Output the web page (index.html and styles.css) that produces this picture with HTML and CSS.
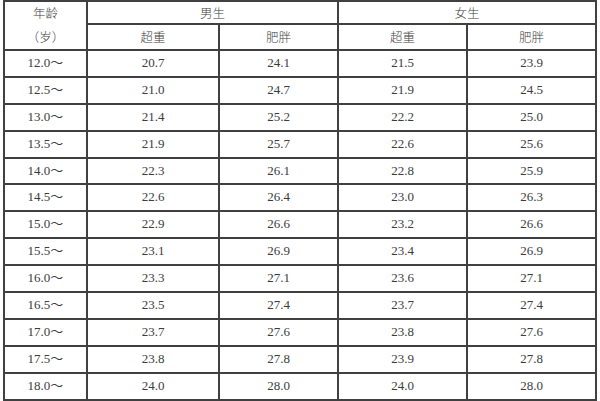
FILE: index.html
```html
<!DOCTYPE html>
<html lang="zh-CN">
<head>
<meta charset="utf-8">
<link rel="stylesheet" href="styles.css">
</head>
<body>
<div class="wrap">
<table class="bmi">
  <colgroup>
    <col class="c-age">
    <col class="c-b1">
    <col class="c-b2">
    <col class="c-g1">
    <col class="c-g2">
  </colgroup>
  <thead>
    <tr class="h1">
      <th rowspan="2" class="age-head"><div class="l1">年龄</div><div class="l2">（岁）</div></th>
      <th colspan="2"><div class="in">男生</div></th>
      <th colspan="2"><div class="in">女生</div></th>
    </tr>
    <tr class="h2">
      <th><div class="in">超重</div></th><th><div class="in">肥胖</div></th><th><div class="in">超重</div></th><th><div class="in">肥胖</div></th>
    </tr>
  </thead>
  <tbody>
    <tr><td><div class="in">12.0～</div></td><td><div class="in">20.7</div></td><td><div class="in">24.1</div></td><td><div class="in">21.5</div></td><td><div class="in">23.9</div></td></tr>
    <tr><td><div class="in">12.5～</div></td><td><div class="in">21.0</div></td><td><div class="in">24.7</div></td><td><div class="in">21.9</div></td><td><div class="in">24.5</div></td></tr>
    <tr><td><div class="in">13.0～</div></td><td><div class="in">21.4</div></td><td><div class="in">25.2</div></td><td><div class="in">22.2</div></td><td><div class="in">25.0</div></td></tr>
    <tr><td><div class="in">13.5～</div></td><td><div class="in">21.9</div></td><td><div class="in">25.7</div></td><td><div class="in">22.6</div></td><td><div class="in">25.6</div></td></tr>
    <tr><td><div class="in">14.0～</div></td><td><div class="in">22.3</div></td><td><div class="in">26.1</div></td><td><div class="in">22.8</div></td><td><div class="in">25.9</div></td></tr>
    <tr><td><div class="in">14.5～</div></td><td><div class="in">22.6</div></td><td><div class="in">26.4</div></td><td><div class="in">23.0</div></td><td><div class="in">26.3</div></td></tr>
    <tr><td><div class="in">15.0～</div></td><td><div class="in">22.9</div></td><td><div class="in">26.6</div></td><td><div class="in">23.2</div></td><td><div class="in">26.6</div></td></tr>
    <tr><td><div class="in">15.5～</div></td><td><div class="in">23.1</div></td><td><div class="in">26.9</div></td><td><div class="in">23.4</div></td><td><div class="in">26.9</div></td></tr>
    <tr><td><div class="in">16.0～</div></td><td><div class="in">23.3</div></td><td><div class="in">27.1</div></td><td><div class="in">23.6</div></td><td><div class="in">27.1</div></td></tr>
    <tr><td><div class="in">16.5～</div></td><td><div class="in">23.5</div></td><td><div class="in">27.4</div></td><td><div class="in">23.7</div></td><td><div class="in">27.4</div></td></tr>
    <tr><td><div class="in">17.0～</div></td><td><div class="in">23.7</div></td><td><div class="in">27.6</div></td><td><div class="in">23.8</div></td><td><div class="in">27.6</div></td></tr>
    <tr><td><div class="in">17.5～</div></td><td><div class="in">23.8</div></td><td><div class="in">27.8</div></td><td><div class="in">23.9</div></td><td><div class="in">27.8</div></td></tr>
    <tr><td><div class="in">18.0～</div></td><td><div class="in">24.0</div></td><td><div class="in">28.0</div></td><td><div class="in">24.0</div></td><td><div class="in">28.0</div></td></tr>
  </tbody>
</table>
</div>
</body>
</html>
```

FILE: styles.css
```css
html, body {
  margin: 0;
  padding: 0;
  background: #ffffff;
}
.wrap {
  padding: 0 0 0 3px;
}
.bmi {
  border-collapse: collapse;
  table-layout: fixed;
  width: 592px;
  font-family: "Liberation Serif", "Noto Sans CJK SC", serif;
  font-size: 13px;
  color: #3c3c3c;
}
.c-age { width: 83px; }
.c-b1 { width: 132px; }
.c-b2 { width: 119px; }
.c-g1 { width: 129px; }
.c-g2 { width: 129px; }
.bmi th, .bmi td {
  border: 2px solid #404040;
  padding: 0;
  text-align: center;
  vertical-align: middle;
  font-weight: normal;
}
.bmi th {
  font-family: "Noto Sans CJK SC", sans-serif;
  font-size: 12.5px;
  font-weight: 300;
}
.in {
  overflow: visible;
  white-space: nowrap;
}
.bmi tbody .in {
  height: 24.9px;
  line-height: 24.9px;
}
.h1 .in {
  height: 21px;
  line-height: 21px;
}
.h2 .in {
  height: 24px;
  line-height: 24px;
}
.age-head {
  vertical-align: top;
}
.age-head .l1 {
  height: 23px;
  line-height: 22px;
}
.age-head .l2 {
  height: 24px;
  line-height: 24px;
}
```
